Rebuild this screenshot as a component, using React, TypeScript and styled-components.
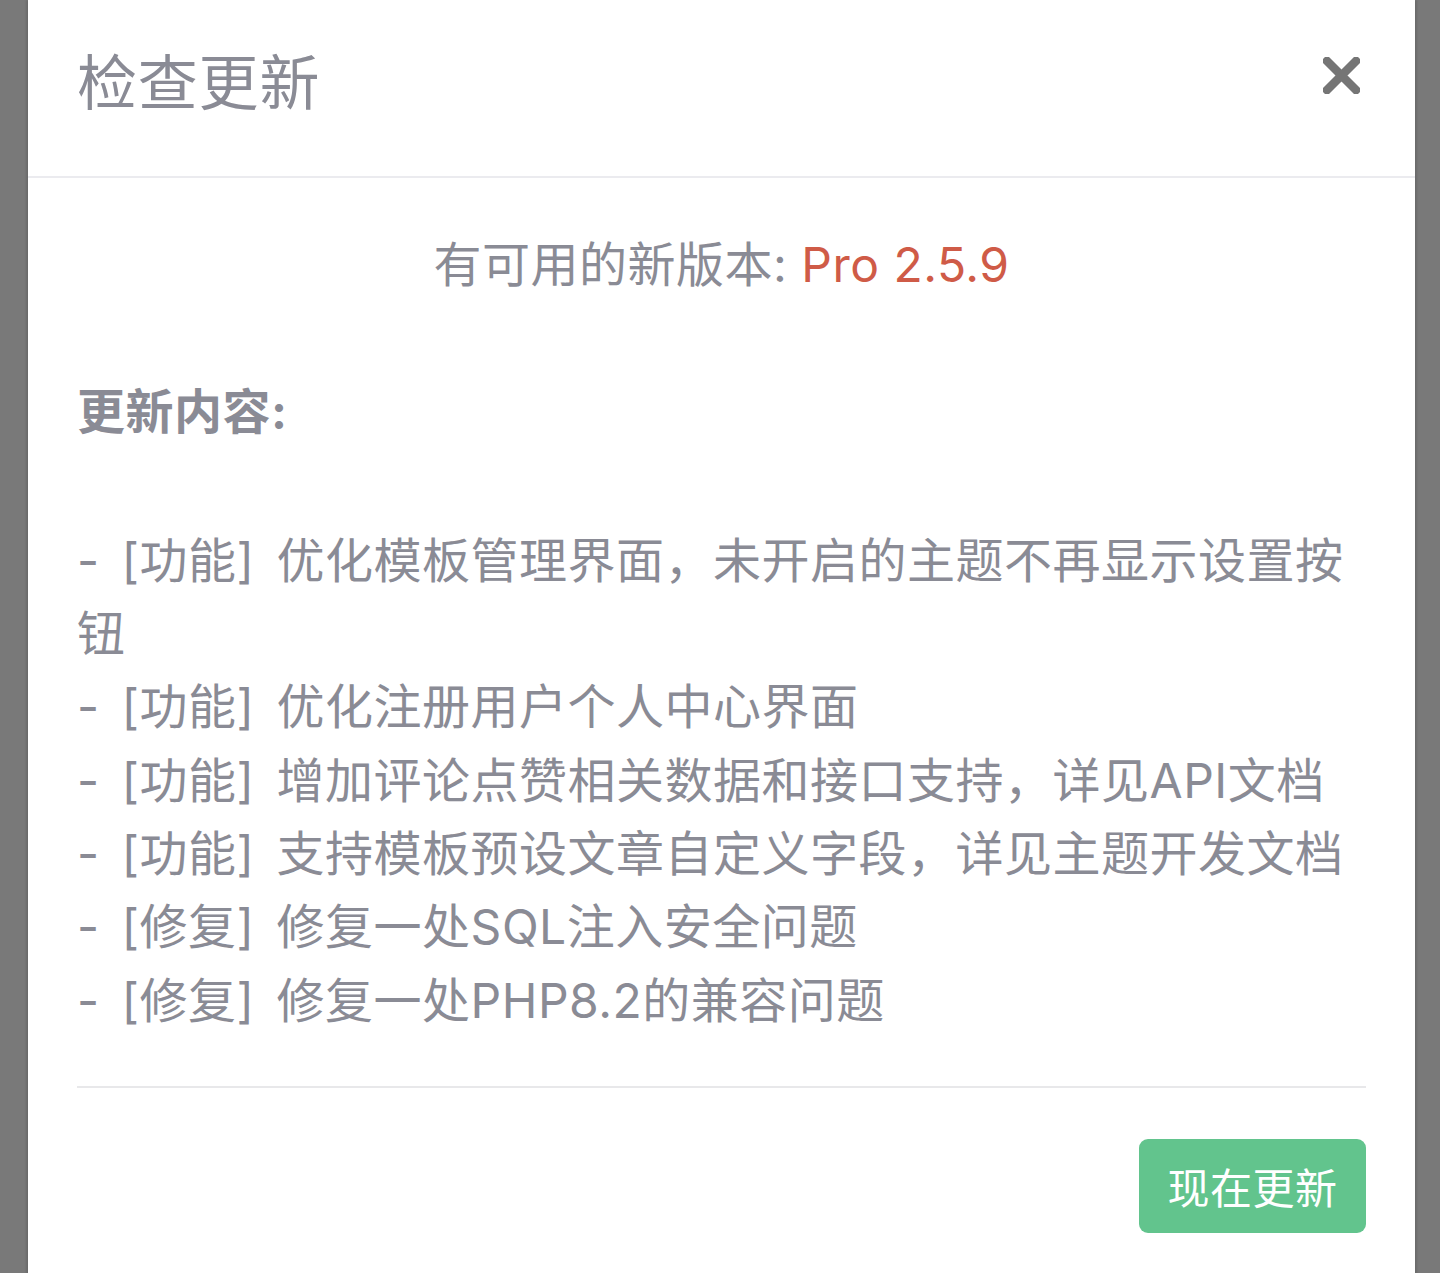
import React from "react";
import styled, { createGlobalStyle } from "styled-components";

const Global = createGlobalStyle`
  html, body {
    margin: 0;
    padding: 0;
    background: #797979;
    overflow: hidden;
  }
  body {
    font-family: Inter, "Noto Sans CJK SC", sans-serif;
  }
`;

const Backdrop = styled.div`
  display: flex;
  justify-content: flex-start;
  padding-left: 28px;
  height: 1273px;
  background: #797979;
`;

const Modal = styled.div`
  width: 1387px;
  min-height: 1400px;
  background: #ffffff;
  box-shadow: -2px 0 2px rgba(0, 0, 0, 0.12), 2px 0 2px rgba(0, 0, 0, 0.12);
  display: flex;
  flex-direction: column;
`;

const Header = styled.div`
  height: 176px;
  border-bottom: 2px solid #ebebef;
  display: flex;
  justify-content: space-between;
  align-items: flex-start;
  padding: 0 55px 0 49px;
`;

const Title = styled.h1`
  margin: 0;
  padding-top: 41px;
  font-size: 60px;
  line-height: 84px;
  font-weight: 400;
  letter-spacing: 0.8px;
  color: #8a8b95;
`;

const CloseButton = styled.button`
  margin-top: 57px;
  width: 37px;
  height: 37px;
  padding: 0;
  border: none;
  background: transparent;
  cursor: pointer;
  display: flex;
`;

const Body = styled.div`
  padding: 50px 49px 0;
  font-size: 48px;
  line-height: 73.3px;
  letter-spacing: 0.5px;
  color: #8a8b95;
`;

const VersionLine = styled.p`
  margin: 0 0 73.3px;
  text-align: center;
`;

const Version = styled.span`
  color: #cf5b47;
`;

const SectionLabel = styled.p`
  margin: 0 0 76px;
  font-weight: 700;
`;

const ChangeLine = styled.p`
  margin: 0;
  word-spacing: 8px;
`;

const Divider = styled.hr`
  margin: 49px 0 0;
  border: none;
  border-top: 2px solid #e8e8ea;
`;

const Footer = styled.div`
  display: flex;
  justify-content: flex-end;
  padding-top: 51px;
`;

const UpdateButton = styled.button`
  width: 227px;
  height: 94px;
  border: none;
  border-radius: 9px;
  background: #62c48d;
  color: #ffffff;
  font-family: Inter, "Noto Sans CJK SC", sans-serif;
  font-size: 42px;
  letter-spacing: 0.5px;
  cursor: pointer;
`;

const changes = [
  "- [功能] 优化模板管理界面，未开启的主题不再显示设置按钮",
  "- [功能] 优化注册用户个人中心界面",
  "- [功能] 增加评论点赞相关数据和接口支持，详见API文档",
  "- [功能] 支持模板预设文章自定义字段，详见主题开发文档",
  "- [修复] 修复一处SQL注入安全问题",
  "- [修复] 修复一处PHP8.2的兼容问题",
];

export default function App() {
  return (
    <>
      <Global />
      <Backdrop>
        <Modal>
          <Header>
            <Title>检查更新</Title>
            <CloseButton aria-label="关闭">
              <svg width="37" height="37" viewBox="0 0 37 37">
                <path
                  d="M4 4 L33 33 M33 4 L4 33"
                  stroke="#757575"
                  strokeWidth="8.5"
                  strokeLinecap="square"
                  fill="none"
                />
              </svg>
            </CloseButton>
          </Header>
          <Body>
            <VersionLine>
              有可用的新版本: <Version>Pro 2.5.9</Version>
            </VersionLine>
            <SectionLabel>更新内容:</SectionLabel>
            {changes.map((c) => (
              <ChangeLine key={c}>{c}</ChangeLine>
            ))}
            <Divider />
            <Footer>
              <UpdateButton>现在更新</UpdateButton>
            </Footer>
          </Body>
        </Modal>
      </Backdrop>
    </>
  );
}
